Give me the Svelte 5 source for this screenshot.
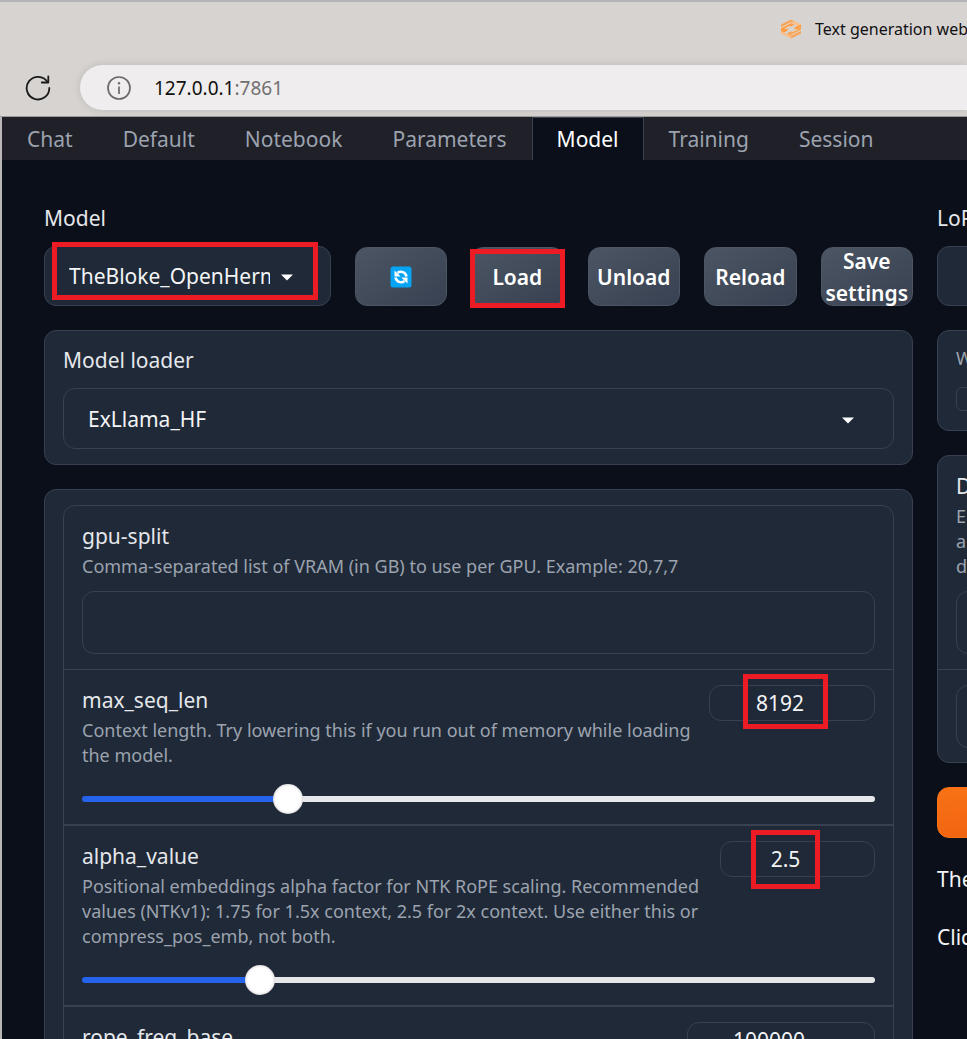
<script>
  const tabs = ['Chat', 'Default', 'Notebook', 'Parameters', 'Model', 'Training', 'Session'];
  let active = $state('Model');

  const actions = ['Load', 'Unload', 'Reload', 'Save settings'];

  let sliders = $state([
    {
      id: 'max_seq_len',
      info: 'Context length. Try lowering this if you run out of memory while loading the model.',
      min: 0, max: 32768, step: 256, value: 8192, width: 166, mark: 'mark-seq'
    },
    {
      id: 'alpha_value',
      info: 'Positional embeddings alpha factor for NTK RoPE scaling. Recommended values (NTKv1): 1.75 for 1.5x context, 2.5 for 2x context. Use either this or compress_pos_emb, not both.',
      min: 1, max: 8, step: 0.05, value: 2.5, width: 155, mark: 'mark-alpha'
    },
    {
      id: 'rope_freq_base',
      info: '',
      min: 0, max: 1000000, step: 1000, value: 100000, width: 188, mark: ''
    }
  ]);

  const fill = (s) => ((s.value - s.min) / (s.max - s.min)) * 100;
</script>

<div class="window">
  <header class="chrome">
    <div class="title">
      <svg width="22" height="20" viewBox="0 0 22 20" aria-hidden="true">
        <path d="M1 5.500 11 0.500l3.500 1.800L1 9z" fill="#f6a75c" />
        <path d="M14.500 2.300 21 5.500v3L11 3.800z" fill="#fbc08a" />
        <path d="M1 9 11 4l3.500 1.800L7.500 9.300v2.400L1 15z" fill="#ff9d45" />
        <path d="M21 5.500v5.500L11 16l-3.500-1.800 7-3.500V8.200z" fill="#ff9d45" />
        <path d="M7.500 14.200 21 8v6.500l-10 5L7.500 17.700z" fill="#f6a75c" />
        <path d="M1 12l10 5v2.500l-10-5z" fill="#fbc08a" />
        <path d="M1 8.700 11 3.700M11 16.300l10-5" stroke="#e8d4c3" stroke-width="1" />
        <path d="M5 9.800l5.500-2.700M11.500 12.800l5.500-2.700" stroke="#e8d4c3" stroke-width="1.200" />
      </svg>
      <span>Text generation web</span>
    </div>
    <div class="address-row">
      <button class="reload" aria-label="Refresh">
        <svg width="26" height="26" viewBox="0 0 26 26" fill="none" stroke="#1b1b1b" stroke-width="1.800" stroke-linecap="round" stroke-linejoin="round">
          <path d="M24.300 13A11.300 11.300 0 1 1 22.500 7" />
          <path d="M23.300 1.500v6h-6.500" />
        </svg>
      </button>
      <div class="address">
        <svg width="24" height="24" viewBox="0 0 24 24" fill="none" stroke="#6b6a6a" stroke-width="1.700" aria-hidden="true">
          <circle cx="12" cy="12" r="11" />
          <path d="M12 10.500V18" />
          <circle cx="12" cy="7.300" r="1.200" fill="#6b6a6a" stroke="none" />
        </svg>
        <span class="url">127.0.0.1<span class="port">:7861</span></span>
      </div>
    </div>
  </header>

  <div class="page">
    <nav class="tabs">
      {#each tabs as tab}
        <button class:selected={active === tab} onclick={() => (active = tab)}>{tab}</button>
      {/each}
    </nav>

    <main>
      <div class="primary">
        <div class="model-row">
          <div class="field">
            <label for="model">Model</label>
            <div class="picker">
              <select id="model"><option>TheBloke_OpenHermes</option></select>
              <svg class="caret" width="12" height="7" viewBox="0 0 12 7" aria-hidden="true"><path d="M0 0.500h12L6 6.500z" fill="#fff" /></svg>
              <span class="mark mark-model"></span>
            </div>
          </div>
          <button class="action" aria-label="Refresh models">
            <svg width="22" height="22" viewBox="0 0 22 22" aria-hidden="true">
              <rect x="0.500" y="0.500" width="21" height="21" rx="2.500" fill="#05a4f4" />
              <g fill="none" stroke="#fff" stroke-width="2.600">
                <path d="M7.500 6.800C11 4.500 15.500 6 16.500 10.500" />
                <path d="M14.500 15.200C11 17.500 6.500 16 5.500 11.500" />
              </g>
              <path d="M4.500 4.500v6h6.200z M17.500 17.500v-6h-6.200z" fill="#fff" />
            </svg>
          </button>
          {#each actions as action}
            <button class="action">
              {action}
              {#if action === 'Load'}<span class="mark mark-load"></span>{/if}
            </button>
          {/each}
        </div>

        <section class="card loader">
          <label for="loader">Model loader</label>
          <div class="picker">
            <select id="loader"><option>ExLlama_HF</option></select>
            <svg class="caret" width="12" height="7" viewBox="0 0 12 7" aria-hidden="true"><path d="M0 0.500h12L6 6.500z" fill="#fff" /></svg>
          </div>
        </section>

        <section class="card settings">
          <div class="group">
            <div class="block">
              <label for="gpu-split">gpu-split</label>
              <p class="info">Comma-separated list of VRAM (in GB) to use per GPU. Example: 20,7,7</p>
              <input id="gpu-split" class="text" type="text" />
            </div>
            {#each sliders as s}
              <div class="block slider">
                <div class="head">
                  <div>
                    <label for={s.id}>{s.id}</label>
                    {#if s.info}<p class="info">{s.info}</p>{/if}
                  </div>
                  <div class="amount" style:width="{s.width}px">
                    <input id={s.id} type="number" min={s.min} max={s.max} step={s.step} bind:value={s.value} />
                    {#if s.mark}<span class="mark {s.mark}"></span>{/if}
                  </div>
                </div>
                <input type="range" aria-label={s.id} min={s.min} max={s.max} step={s.step} bind:value={s.value} style:--fill="{fill(s)}%" />
              </div>
            {/each}
          </div>
        </section>
      </div>

      <aside class="secondary">
        <div class="field">
          <label for="lora">LoRA</label>
          <select id="lora"></select>
        </div>
        <section class="card memory">
          <label class="info" for="memory">With</label>
          <input id="memory" class="small" type="text" />
        </section>
        <section class="card download">
          <div class="block">
            <label for="download">Do</label>
            <p class="info">E<br />a<br />d</p>
            <input id="download" class="text" type="text" />
          </div>
          <div class="block">
            <input class="text" type="text" aria-label="File name" />
          </div>
        </section>
        <button class="submit" aria-label="Download"></button>
        <p class="note">The</p>
        <p class="note">Click</p>
      </aside>
    </main>
  </div>
</div>

<style>
  :global(body) {
    margin: 0;
    background: #0b0f19;
  }

  * {
    box-sizing: border-box;
  }

  .window {
    height: 100vh;
    overflow: hidden;
    display: flex;
    flex-direction: column;
    background: #d7d3d1;
    font-family: "Noto Sans", sans-serif;
    font-size: 21px;
    color: #f3f4f6;
  }

  button,
  input,
  select {
    font: inherit;
    color: inherit;
    margin: 0;
  }

  p {
    margin: 0;
  }

  /* Browser chrome */
  .chrome {
    flex: none;
    border-top: 2px solid #b3b4b8;
    border-bottom: 1px solid #9b9999;
    color: #111;
  }

  .title {
    display: flex;
    align-items: center;
    gap: 13px;
    width: 187px;
    height: 54px;
    margin-left: auto;
    font-size: 16px;
    white-space: nowrap;
  }

  .title svg {
    flex: none;
  }

  .address-row {
    display: flex;
    align-items: center;
    gap: 29px;
    padding: 9px 0 6px 25px;
  }

  .reload {
    display: flex;
    padding: 0;
    border: 0;
    background: none;
  }

  .address {
    flex: 1;
    display: flex;
    align-items: center;
    gap: 23px;
    height: 45px;
    padding-left: 27px;
    border-radius: 23px 0 0 23px;
    background: #efeded;
    box-shadow: 0 0 8px rgba(0, 0, 0, 0.12);
  }

  .url {
    font-size: 19px;
  }

  .port {
    color: #717070;
  }

  /* Page */
  .page {
    flex: 1;
    min-height: 0;
    border-left: 2px solid #b9b7b7;
    background: #0b0f19;
  }

  .tabs {
    display: flex;
    height: 43px;
    background: #1f2028;
  }

  .tabs button {
    padding: 0 24px;
    border: 1px solid transparent;
    border-width: 1px 1px 0;
    background: none;
    color: #9ca3af;
  }

  .tabs .selected {
    border-color: #374151;
    background: #0b0f19;
    color: #fff;
  }

  main {
    display: flex;
    gap: 24px;
    padding: 43px 0 0 42px;
  }

  .primary {
    flex: 1;
    min-width: 0;
    display: flex;
    flex-direction: column;
    gap: 24px;
  }

  .secondary {
    flex: 0 0 30px;
    min-width: 0;
    display: flex;
    flex-direction: column;
    gap: 24px;
    white-space: nowrap;
  }

  .secondary > * {
    width: 300px;
  }

  label {
    display: block;
    line-height: 31px;
    color: #e5e7eb;
  }

  .info {
    font-size: 18px;
    line-height: 25px;
    color: #9ca3af;
  }

  .field {
    display: flex;
    flex-direction: column;
    gap: 12px;
  }

  select,
  .text,
  .small,
  .amount input {
    display: block;
    width: 100%;
    border: 1px solid #374151;
    border-radius: 12px;
    background: #1f2937;
    color: #f3f4f6;
    outline: none;
  }

  select {
    appearance: none;
    height: 60px;
    padding: 0 60px 0 24px;
  }

  .loader select {
    height: 61px;
  }

  .text {
    height: 63px;
    padding: 0 16px;
  }

  .picker {
    position: relative;
  }

  .caret {
    position: absolute;
    top: calc(50% - 2px);
    right: 38px;
  }

  .loader .caret {
    right: 40px;
  }

  .model-row {
    display: grid;
    grid-template-columns: minmax(0, 31fr) repeat(5, minmax(0, 10fr));
    gap: 24px;
    align-items: end;
  }

  .action {
    position: relative;
    display: flex;
    align-items: center;
    justify-content: center;
    height: 59px;
    padding: 0;
    border: 1px solid #4b5563;
    border-radius: 12px;
    background: linear-gradient(to bottom right, #4b5563, #374151);
    color: #fff;
    font-weight: 600;
    line-height: 32px;
  }

  .card {
    border: 1px solid #374151;
    border-radius: 12px;
    background: #1f2937;
  }

  .loader {
    display: flex;
    flex-direction: column;
    gap: 12px;
    padding: 14px 18px 15px;
  }

  .settings {
    padding: 15px 18px;
  }

  .group {
    border: 1px solid #374151;
    border-radius: 12px;
  }

  .block {
    padding: 15px 18px;
  }

  .block + .block {
    border-top: 1px solid #374151;
  }

  .block.slider + .slider {
    border-top-width: 2px;
  }

  .slider {
    padding-bottom: 10px;
  }

  .block .info {
    margin-top: 2px;
  }

  .info + .text {
    margin-top: 12px;
  }

  .head {
    display: flex;
    justify-content: space-between;
    gap: 8px;
    margin-bottom: 16px;
  }

  .amount {
    position: relative;
    flex: none;
  }

  .amount input {
    height: 36px;
    padding: 0 24px 0 0;
    text-align: center;
    appearance: textfield;
  }

  .amount input::-webkit-inner-spin-button {
    display: none;
  }

  input[type='range'] {
    appearance: none;
    display: block;
    width: 100%;
    height: 30px;
    background: none;
  }

  input[type='range']::-webkit-slider-runnable-track {
    height: 6px;
    border-radius: 3px;
    background: linear-gradient(to right, #2563eb var(--fill), #e5e7eb var(--fill));
  }

  input[type='range']::-webkit-slider-thumb {
    appearance: none;
    width: 30px;
    height: 30px;
    margin-top: -12px;
    border-radius: 50%;
    background: #fff;
    box-shadow: inset 0 0 3px rgba(0, 0, 0, 0.3);
  }

  .memory {
    padding: 15px 18px 19px;
  }

  .memory .small {
    height: 24px;
    margin-top: 16px;
    border-radius: 6px;
  }

  .download .block:last-child {
    padding-bottom: 14px;
  }

  .submit {
    flex: none;
    height: 51px;
    border: 1px solid #f97316;
    border-radius: 12px;
    background: linear-gradient(to bottom right, #f97316, #ea580c);
  }

  .note {
    line-height: 34px;
  }

  /* Highlight frames */
  .mark {
    position: absolute;
    border: 5px solid #ed1c24;
    pointer-events: none;
  }

  .mark-model {
    top: -4px;
    left: 8px;
    right: 13px;
    height: 58px;
  }

  .mark-load {
    inset: 1px -2px -3px;
  }

  .mark-seq {
    top: -11px;
    left: 34px;
    width: 85px;
    height: 55px;
  }

  .mark-alpha {
    top: -11px;
    left: 31px;
    width: 69px;
    height: 59px;
  }
</style>
